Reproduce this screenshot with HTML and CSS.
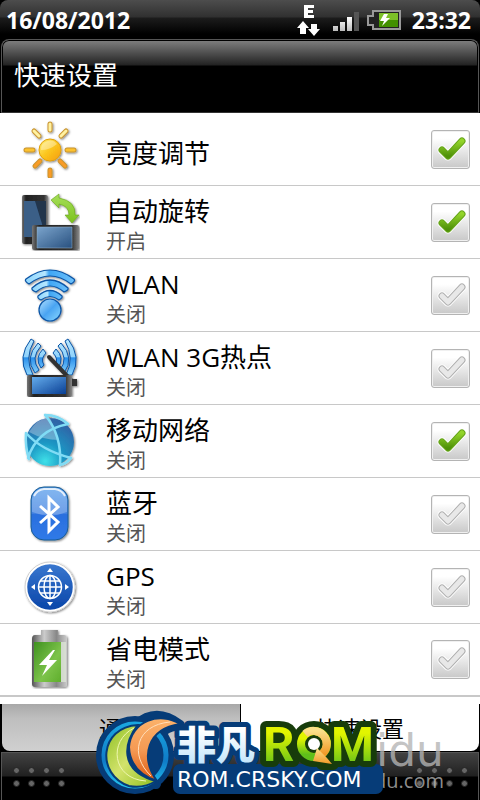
FILE: index.html
```html
<!DOCTYPE html>
<html lang="zh-CN">
<head>
<meta charset="utf-8">
<meta name="viewport" content="width=device-width, initial-scale=1">
<title>快速设置</title>
<link rel="stylesheet" href="styles.css">
</head>
<body>
<svg class="defs" width="0" height="0" aria-hidden="true">
  <defs>
    <linearGradient id="gTick" x1="0" y1="0" x2="0" y2="1"><stop offset="0" stop-color="#93d52a"/><stop offset="1" stop-color="#4f9108"/></linearGradient>
    <linearGradient id="gArrow" x1="0" y1="0" x2="0" y2="1"><stop offset="0" stop-color="#a6df5a"/><stop offset="1" stop-color="#7cc21f"/></linearGradient>
    <linearGradient id="gSky" x1="0" y1="0" x2="1" y2="0"><stop offset="0" stop-color="#8fd6fd"/><stop offset=".4" stop-color="#b4e6ff"/><stop offset=".48" stop-color="#3fa6f5"/><stop offset="1" stop-color="#6cc0fa"/></linearGradient>
    <linearGradient id="gWave" x1="0" y1="0" x2="0" y2="1"><stop offset="0" stop-color="#b9e8ff"/><stop offset=".5" stop-color="#8fd2fb"/><stop offset=".52" stop-color="#2a90ec"/><stop offset="1" stop-color="#8fd6fd"/></linearGradient>
    <linearGradient id="gBall" x1="0" y1="0" x2="1" y2="1"><stop offset="0" stop-color="#b4e2ff"/><stop offset=".5" stop-color="#4aa4f2"/><stop offset="1" stop-color="#8bd9ff"/></linearGradient>
    <linearGradient id="gScreen" x1="0" y1="0" x2="1" y2="1"><stop offset="0" stop-color="#7ba4cc"/><stop offset="1" stop-color="#28507f"/></linearGradient>
    <linearGradient id="gScreen2" x1="0" y1="0" x2="1" y2="1"><stop offset="0" stop-color="#64acec"/><stop offset="1" stop-color="#0a3f94"/></linearGradient>
    <linearGradient id="gBody" x1="0" y1="0" x2="1" y2="0"><stop offset="0" stop-color="#777"/><stop offset=".15" stop-color="#222"/><stop offset=".85" stop-color="#333"/><stop offset="1" stop-color="#888"/></linearGradient>
    <linearGradient id="gSun" x1="0" y1="0" x2="1" y2="1"><stop offset="0" stop-color="#fff27a"/><stop offset=".5" stop-color="#fbc51c"/><stop offset="1" stop-color="#f59b10"/></linearGradient>
    <radialGradient id="gGlobe" cx=".4" cy=".9" r=".85"><stop offset="0" stop-color="#3fe0e8"/><stop offset=".45" stop-color="#1b97c4"/><stop offset="1" stop-color="#2f66a8"/></radialGradient>
    <linearGradient id="gBt" x1="0" y1="0" x2="0" y2="1"><stop offset="0" stop-color="#5aa0ec"/><stop offset=".5" stop-color="#3f7fe0"/><stop offset=".52" stop-color="#2b6fde"/><stop offset="1" stop-color="#2f7ae8"/></linearGradient>
    <linearGradient id="gGps" x1="0" y1="0" x2="0" y2="1"><stop offset="0" stop-color="#3a78d0"/><stop offset="1" stop-color="#0844a8"/></linearGradient>
    <linearGradient id="gMetal" x1="0" y1="0" x2="1" y2="0"><stop offset="0" stop-color="#555"/><stop offset=".35" stop-color="#ccc"/><stop offset=".7" stop-color="#888"/><stop offset="1" stop-color="#ccc"/></linearGradient>
    <linearGradient id="gCell" x1="0" y1="0" x2="1" y2="1"><stop offset="0" stop-color="#3f9120"/><stop offset=".6" stop-color="#7cc34a"/><stop offset="1" stop-color="#5fae2c"/></linearGradient>
    <linearGradient id="gBar" x1="0" y1="0" x2="0" y2="1"><stop offset="0" stop-color="#fff"/><stop offset="1" stop-color="#bbb"/></linearGradient>
    <linearGradient id="gLime" x1="0" y1="0" x2="1" y2="1"><stop offset="0" stop-color="#8cbf22"/><stop offset=".5" stop-color="#d3e36c"/><stop offset="1" stop-color="#8fbe1e"/></linearGradient>
    <linearGradient id="gOrange" x1="0" y1="0" x2="0" y2="1"><stop offset="0" stop-color="#fbb26a"/><stop offset=".5" stop-color="#f59a54"/><stop offset="1" stop-color="#dd5a12"/></linearGradient>
    <linearGradient id="gRing" x1="0" y1="0" x2="0" y2="1"><stop offset="0" stop-color="#19a5e0"/><stop offset=".6" stop-color="#0f7cc8"/><stop offset="1" stop-color="#22c0ee"/></linearGradient>
    <linearGradient id="gIce" x1="0" y1="0" x2="0" y2="1"><stop offset=".3" stop-color="#fff"/><stop offset="1" stop-color="#b5e0fa"/></linearGradient>
    <linearGradient id="gRom" x1="0" y1="0" x2="0" y2="1"><stop offset=".3" stop-color="#e2f500"/><stop offset=".9" stop-color="#5fbf1a"/></linearGradient>
    <linearGradient id="gGold" x1="0" y1="0" x2="0" y2="1"><stop offset="0" stop-color="#fbe08a"/><stop offset="1" stop-color="#f09a28"/></linearGradient>
    <filter id="shadow" x="-20%" y="-20%" width="150%" height="150%"><feDropShadow dx="1" dy="1" stdDeviation="1" flood-opacity=".5"/></filter>
    <symbol id="tick" viewBox="0 0 39 39"><path class="tick-edge" d="M11 20l6 6 14-15"/><path class="tick-line" d="M11 20l6 6 14-15"/><path class="tick-fill" d="M11 20l6 6 14-15"/></symbol>
  </defs>
</svg>

<div class="screen">
  <header class="status">
    <span>16/08/2012</span>
    <div class="status-right">
      <svg class="net" viewBox="0 0 24 32" aria-label="EDGE"><path fill="#fff" d="M7 1h10v3h-6v2h5v3h-5v2h6v3H7zM6 17l6 7H9v6H3v-6H0zM14 20h6v5h3l-6 7-6-7h3z"/></svg>
      <svg class="signal" viewBox="0 0 26 20" aria-label="信号"><path fill="url(#gBar)" d="M0 14h5v5H0zM7 10h5v9H7zM14 5h5v14h-5z"/><path fill="#555" d="M21 0h5v19h-5z"/></svg>
      <svg class="battery" viewBox="0 0 34 20" aria-label="电池"><path d="M6 1h27v18H6v-4H1V6h5z" fill="#222" stroke="#999" stroke-width="2"/><path fill="#7cc029" d="M12 3h19v7H12z"/><path fill="#429000" d="M12 10h19v7H12z"/><path fill="#fff" d="M17 4h4l-2 4h4l-8 8 2-5h-4z"/></svg>
      <span>23:32</span>
    </div>
  </header>

  <div class="title"><h1>快速设置</h1></div>

  <main class="list">
    <label class="row">
      <svg class="icon" viewBox="0 0 60 60"><g filter="url(#shadow)"><g stroke="#c9942e" stroke-width="5" stroke-linecap="round"><path d="M30 6v6M14 13l5 5M46 13l-5 5M6 32h7M47 32h7M15 48l5-5M45 48l-5-5M30 52v6"/></g><g stroke="#fff1a0" stroke-width="3" stroke-linecap="round"><path d="M30 6v6M14 13l5 5M46 13l-5 5"/></g><path stroke="#fcc12e" stroke-width="3" stroke-linecap="round" d="M6 32h7M47 32h7"/><path stroke="#f99b28" stroke-width="3" stroke-linecap="round" d="M15 48l5-5M45 48l-5-5M30 52v6"/><circle cx="30" cy="32" r="11" fill="url(#gSun)" stroke="#e0a010"/></g><path fill="#fff" opacity=".35" d="M21 32a9 9 0 0 1 16-6q-7 6-16 6z"/></svg>
      <span class="text"><span class="name">亮度调节</span></span>
      <span class="check"><input type="checkbox" checked><svg><use href="#tick"/></svg></span>
    </label>
    <label class="row">
      <svg class="icon" viewBox="0 0 60 60"><g filter="url(#shadow)"><rect x="2" y="4" width="26" height="49" rx="2" fill="url(#gBody)"/><path fill="#3b5f87" d="M4 10h22v36H4z"/><path fill="#20344c" d="M15 10h11v36z"/><path fill="url(#gArrow)" stroke="#6aa51c" stroke-width=".6" d="M31 9l8-6v4q17 3 16 17h4l-7 8-7-8h4q0-9-10-11v4z"/><rect x="12" y="34" width="47" height="25" rx="2" fill="url(#gBody)"/><path fill="url(#gScreen)" stroke="#9bb5cf" stroke-width=".5" d="M17 36h35v21H17z"/></g></svg>
      <span class="text"><span class="name">自动旋转</span><span class="state">开启</span></span>
      <span class="check"><input type="checkbox" checked><svg><use href="#tick"/></svg></span>
    </label>
    <label class="row">
      <svg class="icon" viewBox="0 0 60 60"><g filter="url(#shadow)" fill="url(#gSky)" stroke="#0c55a6" stroke-width="1.2" stroke-linejoin="round"><path d="M6 15Q30-3 54 15q2 2-3 5Q30 4 9 20q-5-3-3-5z"/><path d="M12 24Q30 8 48 24q1 2-4 4Q30 16 16 28q-5-2-4-4z"/><path d="M18 32Q30 21 42 32q1 2-3 4-9-7-18 0-4-2-3-4z"/><circle cx="30" cy="46" r="11" fill="url(#gBall)"/></g></svg>
      <span class="text"><span class="name">WLAN</span><span class="state">关闭</span></span>
      <span class="check"><input type="checkbox"><svg><use href="#tick"/></svg></span>
    </label>
    <label class="row">
      <svg class="icon" viewBox="0 0 60 60"><g filter="url(#shadow)"><g fill="url(#gWave)" stroke="#0c55a6" stroke-linejoin="round"><path d="M11 2Q-3 20 7 38h6Q4 21 14 4zM18 6Q4 21 15 36l4-3Q10 21 21 9zM23 12q-9 9-2 19l3-3q-4-6 2-12z"/><path d="M48 2q14 18 4 36h-6q9-17-1-34zM41 6q14 15 3 30l-4-3q9-12-2-24zM36 12q9 9 2 19l-3-3q4-6-2-12z"/></g><path d="M29 20l22 23" stroke="#333" stroke-width="4" stroke-linecap="round"/><path fill="#333" d="M47 42h10v7H47z"/><rect x="7" y="38" width="45" height="22" rx="2" fill="url(#gBody)"/><path fill="url(#gScreen2)" d="M12 40h34v17H12z"/></g></svg>
      <span class="text"><span class="name">WLAN 3G热点</span><span class="state">关闭</span></span>
      <span class="check"><input type="checkbox"><svg><use href="#tick"/></svg></span>
    </label>
    <label class="row">
      <svg class="icon" viewBox="0 0 60 60"><g filter="url(#shadow)"><circle cx="30" cy="32" r="24" fill="url(#gGlobe)"/><path fill="#fff" opacity=".3" d="M9 22Q18 7 30 8q5 10 9 22Q23 30 9 22z"/><g fill="none" stroke="#80dcf5" stroke-width="2.5" stroke-linecap="round"><path d="M25 5q17 20 15 50M6 23q15 17 45 25M48 14Q17 20 8 48M25 5q13 0 23 9M6 23q-1 14 3 26M40 55q6-1 11-7"/></g></g></svg>
      <span class="text"><span class="name">移动网络</span><span class="state">关闭</span></span>
      <span class="check"><input type="checkbox" checked><svg><use href="#tick"/></svg></span>
    </label>
    <label class="row">
      <svg class="icon" viewBox="0 0 60 60"><g filter="url(#shadow)"><rect x="11" y="4" width="37" height="53" rx="13" fill="url(#gBt)" stroke="#1b5c94"/></g><path fill="none" stroke="#fff" stroke-width="2" opacity=".8" d="M14 13Q17 7 24 6h11q7 1 10 7"/><path fill="#fff" opacity=".25" d="M12 16Q14 6 24 6h11q10 0 12 10v13Q30 36 12 29z"/><path d="M20 23l18 16-9 9V15l9 9-18 16" fill="none" stroke="#fff" stroke-width="3"/></svg>
      <span class="text"><span class="name">蓝牙</span><span class="state">关闭</span></span>
      <span class="check"><input type="checkbox"><svg><use href="#tick"/></svg></span>
    </label>
    <label class="row">
      <svg class="icon" viewBox="0 0 60 60"><circle cx="30" cy="31" r="24" fill="url(#gGps)" stroke="#fff" stroke-width="2.5" filter="url(#shadow)"/><circle cx="30" cy="31" r="25" fill="none" stroke="#bbb" stroke-width=".7"/><g fill="none" stroke="#fff" stroke-width="1.5"><circle cx="30" cy="31" r="11.500"/><ellipse cx="30" cy="31" rx="6" ry="11.500"/><path d="M30 19v24M18 31h24M20 25h20M20 37h20"/></g><path fill="#fff" d="M30 12l3 4h-6zM30 50l3-4h-6zM11 31l4-3v6zM49 31l-4-3v6z"/></svg>
      <span class="text"><span class="name">GPS</span><span class="state">关闭</span></span>
      <span class="check"><input type="checkbox"><svg><use href="#tick"/></svg></span>
    </label>
    <label class="row">
      <svg class="icon" viewBox="0 0 60 60"><g filter="url(#shadow)"><path fill="url(#gMetal)" d="M21 1h17v5h6q3 0 3 4v45q0 3-3 3H15q-3 0-3-3V10q0-4 3-4h6z"/><path fill="url(#gCell)" d="M14 13h27v40H14z"/><path fill="#dce5d6" opacity=".8" d="M41 13h5v40h-5z"/></g><path fill="#fff" d="M33 21L19 36h8l-5 11 15-16h-8l6-10z"/></svg>
      <span class="text"><span class="name">省电模式</span><span class="state">关闭</span></span>
      <span class="check"><input type="checkbox"><svg><use href="#tick"/></svg></span>
    </label>
  </main>

  <nav class="tabs">
    <button class="tab" type="button">通知</button>
    <button class="tab active" type="button">快速设置</button>
  </nav>

  <footer class="grip">
    <span class="dots"><i></i><i></i><i></i><i></i><i></i><i></i><i></i><i></i></span>
    <span class="dots"><i></i><i></i><i></i><i></i><i></i><i></i><i></i><i></i></span>
  </footer>

  <div class="credit"><span class="credit-name">Baidu</span><span class="credit-site">jingyan.baidu.com</span></div>

  <svg class="brand" viewBox="0 0 290 94" aria-label="非凡ROM">
    <g stroke="#063c78" stroke-width="10" stroke-linejoin="round" fill="#063c78">
      <circle cx="39" cy="50" r="34"/><path d="M40 20Q60 2 84 20 64 22 59 38L60 79Q25 60 40 25z"/>
      <rect x="82" y="64" width="200" height="20" rx="2"/>
      <text class="cn" x="81" y="54">非凡</text>
    </g>
    <circle cx="39" cy="50" r="31" fill="#063c78" stroke="url(#gRing)" stroke-width="5"/>
    <path fill="url(#gLime)" stroke="#063c78" stroke-width="2" d="M42 20C3 22 0 70 33 81q14 3 27-5C22 66 28 36 42 20z"/>
    <path fill="none" stroke="#eff7b0" d="M38 23C12 36 16 74 50 76"/>
    <path fill="url(#gOrange)" stroke="#063c78" stroke-width="2" d="M84 19C64 6 35 16 33 42q1 25 28 34C44 52 51 24 84 19z"/>
    <path fill="none" stroke="#ffdeba" d="M74 17C40 20 33 50 55 71"/>
    <text class="cn" x="81" y="54" fill="url(#gIce)">非凡</text>
    <g stroke="#173c0b" stroke-width="12" stroke-linejoin="round" fill="#173c0b"><text class="rom" x="167" y="56">R</text><circle cx="218" cy="39" r="17"/><path d="M227 50l10 9H226z"/><text class="rom" x="235" y="56">M</text></g>
    <g fill="url(#gRom)"><text class="rom" x="167" y="56">R</text><text class="rom" x="235" y="56">M</text></g>
    <circle cx="218" cy="39" r="13" fill="#173c0b" stroke="url(#gRom)" stroke-width="8"/>
    <circle cx="218" cy="39" r="6" fill="#fff"/>
    <path fill="none" stroke="url(#gGold)" stroke-width="8" d="M209 29a13 13 0 1 1 17 20"/>
    <path fill="url(#gGold)" d="M221 43l-4 13 19 3-5-6z"/>
    <text class="site" x="81" y="82" fill="#fff">ROM.CRSKY.COM</text>
  </svg>
</div>
</body>
</html>
```
FILE: styles.css
```css
* {
  box-sizing: border-box;
}

body {
  margin: 0;
  background: #000;
  color: #000;
  font-family: "Open Sans", "Noto Sans CJK SC", sans-serif;
}

.defs {
  position: absolute;
}

.screen {
  position: relative;
  display: flex;
  flex-direction: column;
  min-height: 100vh;
  overflow: hidden;
}

.status {
  display: flex;
  align-items: center;
  justify-content: space-between;
  height: 39px;
  padding: 0 9px 0 6px;
  border-radius: 8px 8px 0 0;
  background: linear-gradient(#4d4d4d 0, #303030 17px, #1c1c1c 18px, #000 34px);
  color: #fff;
  font-size: 23px;
  font-weight: 700;
}

.status-right {
  display: flex;
  align-items: center;
}

.net {
  width: 24px;
  height: 32px;
  margin-right: 12px;
}

.signal {
  width: 26px;
  height: 20px;
  margin: 4px 8px 0 0;
}

.battery {
  width: 34px;
  height: 20px;
  margin-right: 11px;
}

.title {
  display: flex;
  align-items: center;
  height: 74px;
  margin: 0 1px;
  padding: 0 12px 2px;
  border: 1px solid #555;
  border-bottom-color: #333;
  border-radius: 8px 8px 0 0;
  background: linear-gradient(#808080 0, #222 25px, #000 26px);
  box-shadow: inset 0 0 0 1px #000;
}

.title h1 {
  margin: 0;
  color: #fff;
  font-size: 26px;
  font-weight: 400;
  line-height: 32px;
}

.list {
  flex: 1;
  background: #fff;
}

.row {
  display: flex;
  align-items: center;
  height: 73px;
  padding: 0 10px 0 20px;
  border-bottom: 1px solid #c8c8c8;
}

.row:last-child {
  border-bottom-width: 2px;
}

.icon {
  width: 60px;
  height: 60px;
  margin: 0 26px 2px 0;
}

.text {
  display: flex;
  flex: 1;
  flex-direction: column;
  padding-top: 8px;
}

.name {
  font-size: 26px;
  line-height: 32px;
}

.state {
  color: #555;
  font-size: 20px;
  line-height: 30px;
}

.check {
  display: grid;
  width: 39px;
  height: 39px;
}

.check input,
.check svg {
  grid-area: 1 / 1;
  width: 39px;
  height: 39px;
  margin: 0;
}

.check input {
  appearance: none;
  border: 1px solid #b4b4b4;
  border-radius: 3px;
  background: linear-gradient(#fff 20%, #c8c8c8);
  box-shadow: inset 0 0 0 1px #f0f0f0;
}

.check svg {
  pointer-events: none;
}

.check input:checked + svg {
  --line: #67a51b;
  --tick: url(#gTick);
}

.tick-edge,
.tick-line,
.tick-fill {
  fill: none;
  stroke-linecap: round;
  stroke-linejoin: round;
}

.tick-edge {
  stroke: #fff;
  stroke-width: 9px;
}

.tick-line {
  stroke: var(--line, #b0b0b0);
  stroke-width: 7px;
}

.tick-fill {
  stroke: var(--tick, #e8e8e8);
  stroke-width: 5px;
}

.tabs {
  display: grid;
  grid-template-columns: 1fr 1fr;
  gap: 1px;
  height: 47px;
  padding: 0 1px 0 2px;
  background: #000;
}

.tab {
  padding: 0 0 1px;
  border: 0;
  border-radius: 0 0 0 8px;
  background: linear-gradient(#a8a8a8, #bebebe 30%, #d0d0d0);
  color: #000;
  font: inherit;
  font-size: 22px;
}

.tab.active {
  border-radius: 0 0 8px 0;
  background: #fff;
}

.grip {
  display: flex;
  justify-content: space-between;
  height: 48px;
  margin: 1px 1px 0;
  padding: 14px 10px 0 11px;
  border: 1px solid #555;
  border-width: 1px 1px 0;
  background: linear-gradient(#424242 0, #202020 23px, #000 24px);
}

.dots {
  display: grid;
  grid-template-columns: repeat(4, 7px);
  grid-auto-rows: 7px;
  gap: 6px 8px;
}

.dots i {
  border: 1px solid #222;
  border-radius: 50%;
  background: #666;
}

.credit {
  position: absolute;
  right: 36px;
  bottom: 7px;
  display: flex;
  flex-direction: column;
  align-items: flex-end;
  color: rgba(180, 180, 180, 0.8);
  pointer-events: none;
}

.credit-name {
  font-family: "DejaVu Sans", sans-serif;
  font-size: 44px;
  line-height: 36px;
}

.credit-site {
  font-size: 20px;
  line-height: 24px;
}

.brand {
  position: absolute;
  bottom: 1px;
  left: 96px;
  width: 290px;
  height: 94px;
}

.cn {
  font-family: "Noto Sans CJK SC", sans-serif;
  font-size: 39px;
  font-weight: 900;
}

.rom {
  font-family: Roboto, sans-serif;
  font-size: 49px;
  font-weight: 700;
}

.site {
  font-family: "DejaVu Sans", sans-serif;
  font-size: 22px;
}
```
